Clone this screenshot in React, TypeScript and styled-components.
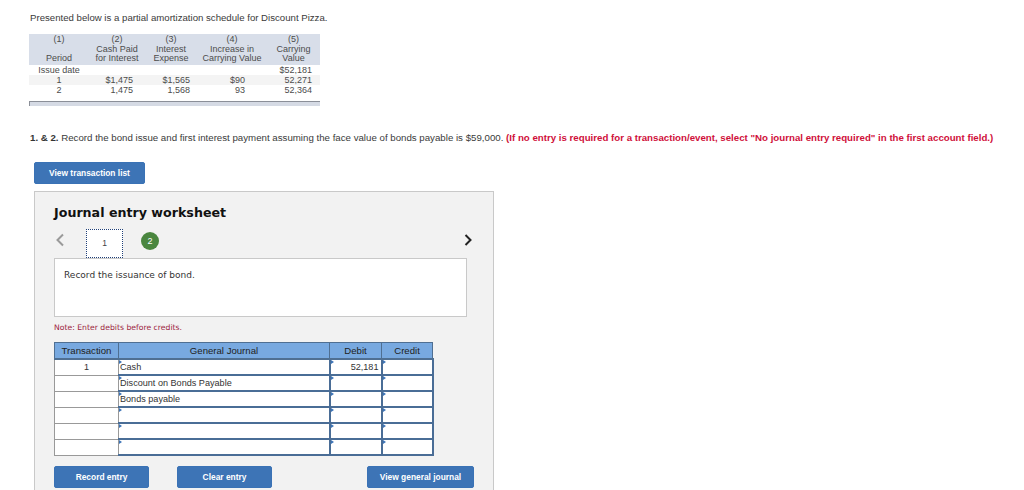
import styled, { createGlobalStyle } from 'styled-components';

const GlobalStyle = createGlobalStyle`
  html, body {
    margin: 0;
    padding: 0;
    background: #fff;
    height: 490px;
    overflow: hidden;
  }
`;

const Page = styled.div`
  width: 1024px;
  height: 490px;
  overflow: hidden;
  padding: 11px 0 0 30px;
  box-sizing: border-box;
  font-family: 'Liberation Sans', Arial, sans-serif;
  color: #3a3a3a;
`;

const Intro = styled.p`
  margin: 0;
  font-size: 9.65px;
  line-height: 13px;
`;

const Schedule = styled.table`
  margin: 10px 0 0 -1px;
  width: 291px;
  table-layout: fixed;
  border-collapse: collapse;
  font-size: 9px;
  line-height: 9.7px;
  color: #4c4c4c;

  th {
    height: 31px;
    background: #d8dee9;
    font-weight: normal;
    text-align: center;
    vertical-align: bottom;
    padding: 0 0 1px;
    box-sizing: border-box;
  }

  td {
    padding: 0;
    height: 10px;
    line-height: 10px;
  }
`;

const Row = styled.tr<{ $shaded?: boolean }>`
  background: ${({ $shaded }) => ($shaded ? '#f4f4f4' : '#fff')};
`;

const Num = styled.td<{ $pad: number }>`
  text-align: right;
  padding-right: ${({ $pad }) => $pad}px !important;
`;

const Mid = styled.td`
  text-align: center;
`;

const ScheduleFooter = styled.div`
  margin: 6px 0 0 -1px;
  width: 290px;
  height: 4px;
  background: #d5dae4;
  border-top: 1px solid #8b8f98;
  border-left: 1px solid #8b8f98;
`;

const Instruction = styled.p`
  margin: 25px 0 0;
  font-size: 9.7px;
  line-height: 13px;
  white-space: nowrap;

  b {
    color: #333;
  }

  strong {
    color: #d0103a;
  }
`;

const Button = styled.button<{ $width: number }>`
  width: ${({ $width }) => $width}px;
  height: 22px;
  padding: 0;
  border: 1px solid #3a72b5;
  border-radius: 2px;
  background: #3d74b6;
  color: #fff;
  font-family: 'Liberation Sans', Arial, sans-serif;
  font-size: 8.4px;
  font-weight: bold;
`;

const ListButton = styled(Button)`
  display: block;
  margin: 18px 0 0 4px;
`;

const Panel = styled.section`
  margin: 7px 0 0 4px;
  width: 460px;
  height: 320px;
  box-sizing: border-box;
  padding: 12px 19px 0;
  background: #f2f2f2;
  border: 1px solid #c9c9c9;
`;

const Title = styled.h2`
  margin: 0;
  font-family: 'DejaVu Sans', sans-serif;
  font-size: 12.65px;
  line-height: 17px;
  font-weight: bold;
  color: #111;
`;

const Steps = styled.div`
  display: flex;
  align-items: flex-start;
  height: 29px;
  margin-top: 8px;
`;

const Chevron = styled.svg`
  display: block;
  flex: none;
  margin-top: 4px;
`;

const CurrentStep = styled.div`
  width: 37px;
  height: 29px;
  margin-left: 20px;
  box-sizing: border-box;
  border: 1px dotted #1f3f78;
  background: #fff;
  font-size: 8.5px;
  line-height: 26px;
  text-align: center;
  color: #444;
`;

const DoneStep = styled.div`
  width: 18px;
  height: 18px;
  margin: 3px 0 0 18px;
  border-radius: 50%;
  background: #4a863f;
  color: #fff;
  font-size: 9px;
  line-height: 18px;
  text-align: center;
`;

const NextWrap = styled.div`
  margin-left: auto;
`;

const Prompt = styled.div`
  width: 413px;
  height: 59px;
  box-sizing: border-box;
  padding: 10px 9px 0;
  background: #fff;
  border: 1px solid #c9c9c9;
  font-family: 'DejaVu Sans', sans-serif;
  font-size: 9px;
  line-height: 12px;
  color: #333;
`;

const Note = styled.p`
  margin: 5px 0 0;
  font-family: 'DejaVu Sans', sans-serif;
  font-size: 7.7px;
  line-height: 11px;
  color: #9c2440;
`;

const Journal = styled.table`
  margin-top: 9px;
  width: 378px;
  table-layout: fixed;
  border-collapse: collapse;
  font-size: 9.1px;
  line-height: 10px;
  color: #333;

  th {
    height: 15px;
    padding: 0;
    background: #78a9e0;
    border: 1px solid #4f6f92;
    border-bottom-width: 2px;
    font-size: 9.6px;
    font-weight: normal;
    color: #222;
  }
`;

const TransactionCell = styled.td`
  height: 14px;
  padding: 0;
  background: #fff;
  border: 1px solid #999;
  text-align: center;
`;

const EntryCell = styled.td<{ $right?: boolean }>`
  position: relative;
  height: 14px;
  padding: ${({ $right }) => ($right ? '0 2px 0 0' : '0 0 0 1px')};
  background: #fff;
  border: 1px solid #4a6d96;
  border-bottom-width: 2px;
  border-right-width: 2px;
  text-align: ${({ $right }) => ($right ? 'right' : 'left')};

  &::before {
    content: '';
    position: absolute;
    left: 0;
    top: 0;
    border-left: 3px solid #3d74b6;
    border-top: 2px solid transparent;
    border-bottom: 2px solid transparent;
  }
`;

const Actions = styled.div`
  display: flex;
  margin-top: 10px;
  width: 420px;
`;

const ClearButton = styled(Button)`
  margin-left: 28px;
`;

const JournalButton = styled(Button)`
  margin-left: auto;
`;

const entries = [
  { number: '1', account: 'Cash', debit: '52,181' },
  { number: '', account: 'Discount on Bonds Payable', debit: '' },
  { number: '', account: 'Bonds payable', debit: '' },
  { number: '', account: '', debit: '' },
  { number: '', account: '', debit: '' },
  { number: '', account: '', debit: '' },
];

const App = () => {
  return (
    <Page>
      <GlobalStyle />
      <Intro>Presented below is a partial amortization schedule for Discount Pizza.</Intro>
      <Schedule>
        <colgroup>
          <col width="60" />
          <col width="56" />
          <col width="52" />
          <col width="70" />
          <col width="53" />
        </colgroup>
        <thead>
          <tr>
            <th>(1)<br /><br />Period</th>
            <th>(2)<br />Cash Paid<br />for Interest</th>
            <th>(3)<br />Interest<br />Expense</th>
            <th>(4)<br />Increase in<br />Carrying Value</th>
            <th>(5)<br />Carrying<br />Value</th>
          </tr>
        </thead>
        <tbody>
          <Row>
            <Mid>Issue date</Mid>
            <td />
            <td />
            <td />
            <Num $pad={8}>$52,181</Num>
          </Row>
          <Row $shaded>
            <Mid>1</Mid>
            <Num $pad={12}>$1,475</Num>
            <Num $pad={7}>$1,565</Num>
            <Num $pad={22}>$90</Num>
            <Num $pad={8}>52,271</Num>
          </Row>
          <Row>
            <Mid>2</Mid>
            <Num $pad={12}>1,475</Num>
            <Num $pad={7}>1,568</Num>
            <Num $pad={22}>93</Num>
            <Num $pad={8}>52,364</Num>
          </Row>
        </tbody>
      </Schedule>
      <ScheduleFooter />
      <Instruction>
        <b>1. &amp; 2.</b> Record the bond issue and first interest payment assuming the face value of bonds payable is $59,000.{' '}
        <strong>(If no entry is required for a transaction/event, select "No journal entry required" in the first account field.)</strong>
      </Instruction>
      <ListButton $width={111}>View transaction list</ListButton>
      <Panel>
        <Title>Journal entry worksheet</Title>
        <Steps>
          <Chevron width="12" height="14" viewBox="0 0 12 14">
            <path d="M9 1.5 L3.5 7 L9 12.5" fill="none" stroke="#9a9a9a" strokeWidth="2" />
          </Chevron>
          <CurrentStep>1</CurrentStep>
          <DoneStep>2</DoneStep>
          <NextWrap>
            <Chevron width="12" height="14" viewBox="0 0 12 14">
              <path d="M3.5 2 L8.5 7 L3.5 12" fill="none" stroke="#222" strokeWidth="2" />
            </Chevron>
          </NextWrap>
        </Steps>
        <Prompt>Record the issuance of bond.</Prompt>
        <Note>Note: Enter debits before credits.</Note>
        <Journal>
          <colgroup>
            <col width="64" />
            <col width="211" />
            <col width="52" />
            <col width="51" />
          </colgroup>
          <thead>
            <tr>
              <th>Transaction</th>
              <th>General Journal</th>
              <th>Debit</th>
              <th>Credit</th>
            </tr>
          </thead>
          <tbody>
            {entries.map((entry, index) => (
              <tr key={index}>
                <TransactionCell>{entry.number}</TransactionCell>
                <EntryCell>{entry.account}</EntryCell>
                <EntryCell $right>{entry.debit}</EntryCell>
                <EntryCell $right />
              </tr>
            ))}
          </tbody>
        </Journal>
        <Actions>
          <Button $width={95}>Record entry</Button>
          <ClearButton $width={95}>Clear entry</ClearButton>
          <JournalButton $width={107}>View general journal</JournalButton>
        </Actions>
      </Panel>
    </Page>
  );
};

export default App;
